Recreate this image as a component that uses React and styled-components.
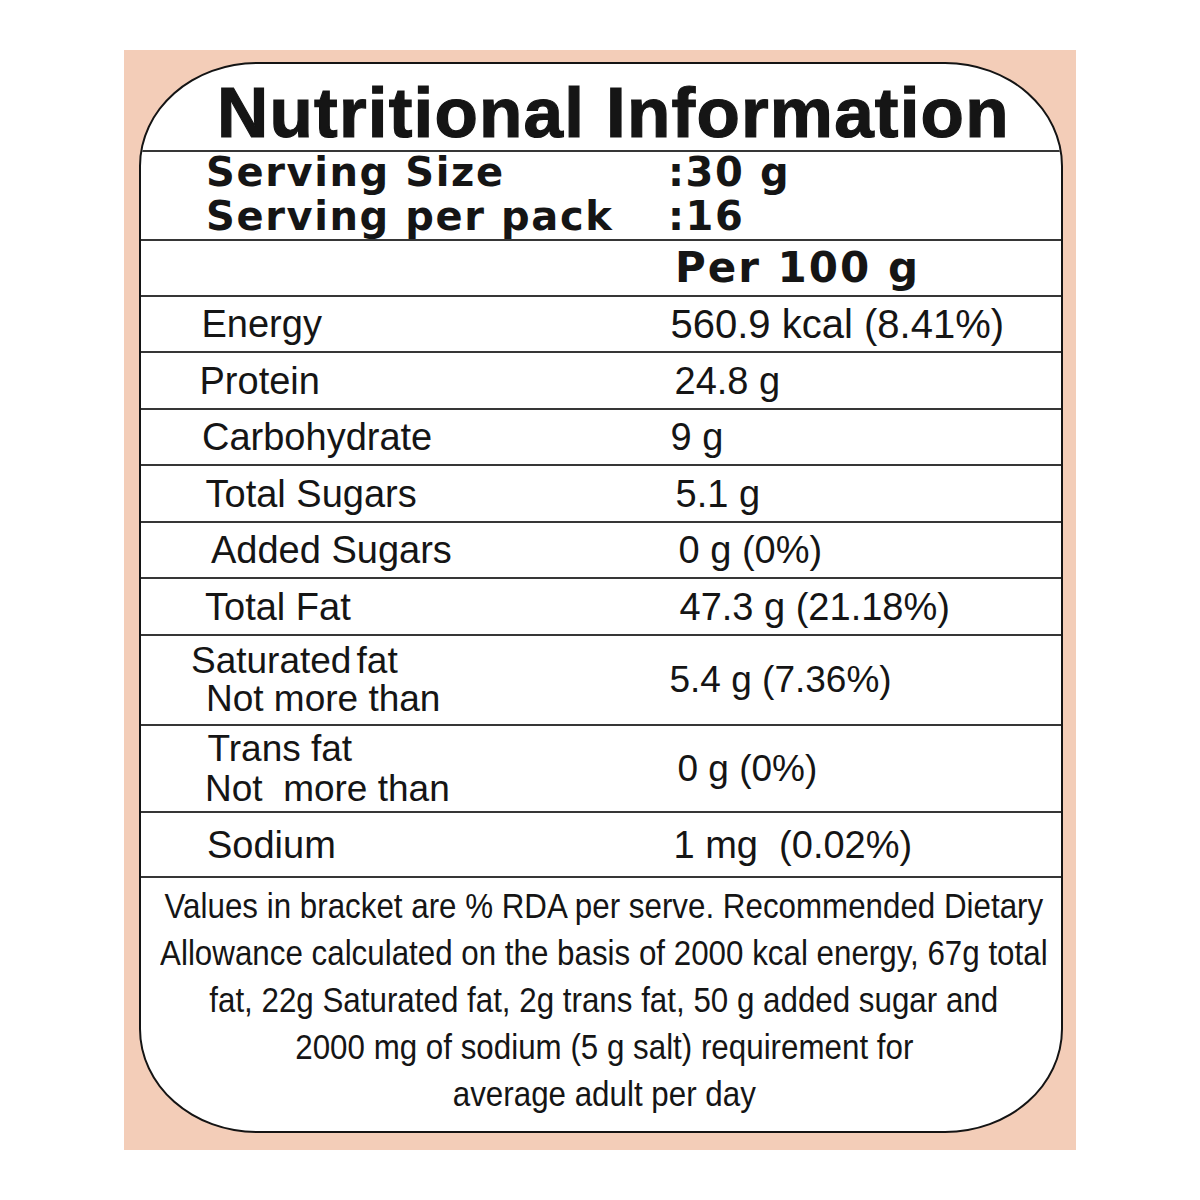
import styled, { createGlobalStyle } from 'styled-components';

const GlobalStyle = createGlobalStyle`
  html, body {
    margin: 0;
    padding: 0;
    background: #fff;
  }
  body {
    font-family: 'Liberation Sans', Arial, sans-serif;
    color: #151515;
  }
`;

const Backdrop = styled.div`
  box-sizing: border-box;
  width: 952px;
  height: 1100px;
  margin: 50px 0 0 124px;
  padding: 12px 13px 17px 15px;
  background: #f3cdb8;
`;

const Card = styled.div`
  box-sizing: border-box;
  height: 100%;
  display: flex;
  flex-direction: column;
  background: #fff;
  border: 2.5px solid #141414;
  border-radius: 118px / 104px;
  overflow: hidden;
`;

const Title = styled.h1`
  box-sizing: border-box;
  height: 86px;
  margin: 0;
  padding: 13px 0 0 76px;
  font-family: 'Liberation Sans', Arial, sans-serif;
  font-size: 71px;
  line-height: 71px;
  font-weight: 700;
  letter-spacing: 1.2px;
  -webkit-text-stroke: 1.2px #151515;
  white-space: nowrap;
`;

const Section = styled.div`
  box-sizing: content-box;
  border-top: 2px solid #363636;
`;

const Serving = styled(Section)`
  height: 87px;
  display: grid;
  grid-template-columns: 462px 1fr;
  padding-left: 65px;
  font-family: 'DejaVu Sans', Verdana, sans-serif;
  font-weight: 700;
  font-size: 40px;
  line-height: 41px;
  letter-spacing: 1.6px;
  white-space: nowrap;
`;

const PerHead = styled(Section)`
  height: 54px;
  padding-left: 534px;
  font-family: 'DejaVu Sans', Verdana, sans-serif;
  font-weight: 700;
  font-size: 42px;
  line-height: 54px;
  letter-spacing: 2px;
  white-space: nowrap;
`;

const Row = styled(Section)`
  height: ${(p) => p.$h}px;
  display: grid;
  grid-template-columns: 528.5px 1fr;
  align-items: center;
  font-size: ${(p) => (p.$multi ? 37 : 38)}px;
  line-height: ${(p) => p.$lh || 38}px;
  white-space: pre;
`;

const Label = styled.div`
  padding-left: ${(p) => p.$x}px;
`;

const Line = styled.div`
  padding-left: ${(p) => p.$x}px;
  word-spacing: ${(p) => (p.$tight ? '-0.14em' : 'normal')};
`;

const Value = styled.div`
  padding-left: ${(p) => p.$x}px;
  font-size: ${(p) => (p.$size ? `${p.$size}px` : 'inherit')};
`;

const Footer = styled(Section)`
  flex: 1;
  display: flex;
  flex-direction: column;
  align-items: center;
  padding: 4px 0 0 6px;
  font-size: 35px;
  line-height: 47px;
`;

const FootLine = styled.div`
  white-space: nowrap;
  transform: scaleX(0.895);
  transform-origin: center;
`;

const rows = [
  { h: 54, label: [{ t: 'Energy', x: 60.5 }], value: '560.9 kcal (8.41%)', vx: 1, size: 40 },
  { h: 55, label: [{ t: 'Protein', x: 58.5 }], value: '24.8 g', vx: 5 },
  { h: 54, label: [{ t: 'Carbohydrate', x: 61 }], value: '9 g', vx: 1 },
  { h: 55, label: [{ t: 'Total Sugars', x: 64.5 }], value: '5.1 g', vx: 6 },
  { h: 54, label: [{ t: 'Added Sugars', x: 70 }], value: '0 g (0%)', vx: 9 },
  { h: 55, label: [{ t: 'Total Fat', x: 64 }], value: '47.3 g (21.18%)', vx: 10 },
  {
    h: 88,
    multi: true,
    lh: 38,
    label: [
      { t: 'Saturated fat', x: 50, tight: true },
      { t: 'Not more than', x: 65 },
    ],
    value: '5.4 g (7.36%)',
    vx: -6,
  },
  {
    h: 85,
    multi: true,
    lh: 40,
    label: [
      { t: 'Trans fat', x: 66.5 },
      { t: 'Not  more than', x: 64 },
    ],
    value: '0 g (0%)',
    vx: 8,
  },
  { h: 63, label: [{ t: 'Sodium', x: 66 }], value: '1 mg  (0.02%)', vx: 4 },
];

const footnote = [
  'Values in bracket are % RDA per serve. Recommended Dietary',
  'Allowance calculated on the basis of 2000 kcal energy, 67g total',
  'fat, 22g Saturated fat, 2g trans fat, 50 g added sugar and',
  '2000 mg of sodium (5 g salt) requirement for',
  'average adult per day',
];

function NutritionRow({ row }) {
  return (
    <Row $h={row.h} $multi={row.multi} $lh={row.lh}>
      <Label>
        {row.label.map((l) => (
          <Line key={l.t} $x={l.x} $tight={l.tight}>
            {l.t}
          </Line>
        ))}
      </Label>
      <Value $x={row.vx} $size={row.size}>
        {row.value}
      </Value>
    </Row>
  );
}

export default function App() {
  return (
    <>
      <GlobalStyle />
      <Backdrop>
        <Card>
          <Title>Nutritional Information</Title>

          <Serving>
            <div>Serving Size</div>
            <div>:30 g</div>
            <div>Serving per pack</div>
            <div>:16</div>
          </Serving>

          <PerHead>Per 100 g</PerHead>

          {rows.map((row) => (
            <NutritionRow key={row.label[0].t} row={row} />
          ))}

          <Footer>
            {footnote.map((line) => (
              <FootLine key={line}>{line}</FootLine>
            ))}
          </Footer>
        </Card>
      </Backdrop>
    </>
  );
}
